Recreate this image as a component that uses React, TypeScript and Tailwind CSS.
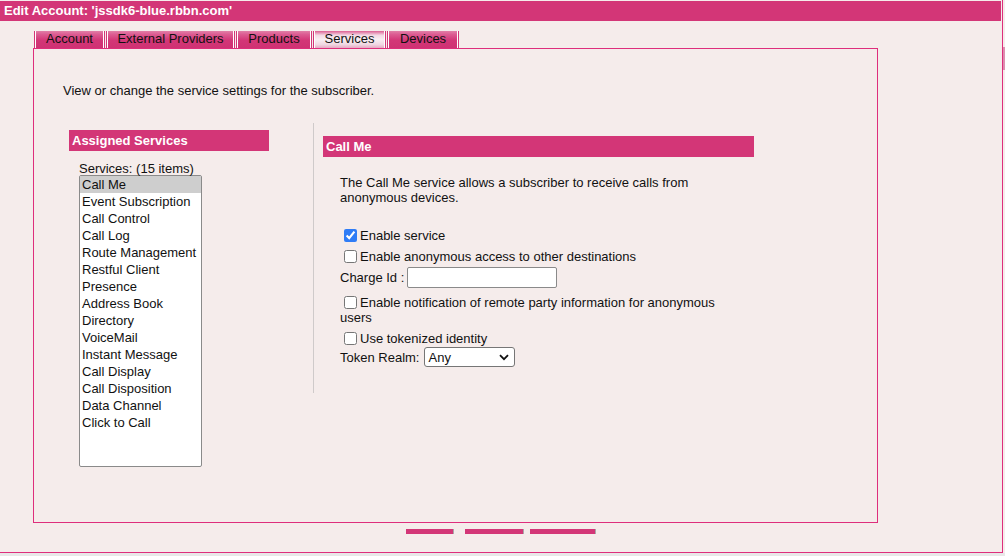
import React from 'react';

const services = [
  'Call Me',
  'Event Subscription',
  'Call Control',
  'Call Log',
  'Route Management',
  'Restful Client',
  'Presence',
  'Address Book',
  'Directory',
  'VoiceMail',
  'Instant Message',
  'Call Display',
  'Call Disposition',
  'Data Channel',
  'Click to Call',
];

const tabs = [
  { label: 'Account', width: 'w-[69px]' },
  { label: 'External Providers', width: 'w-[127px]' },
  { label: 'Products', width: 'w-[74px]' },
  { label: 'Services', width: 'w-[71px]', active: true },
  { label: 'Devices', width: 'w-[70px]' },
];

function Check({ checked }: { checked?: boolean }) {
  return (
    <input
      type="checkbox"
      defaultChecked={checked}
      className="m-0 mr-[3px] h-[13px] w-[13px] accent-[#2f7cf6]"
    />
  );
}

export default function App() {
  return (
    <div className="w-[1005px] h-[556px] bg-[#e8e8e8] text-[13px] text-[#111] font-['Liberation_Sans',Arial,sans-serif] overflow-hidden">
      <div className="flex h-[553px]">
        {/* main frame */}
        <div className="w-[1003px] h-full bg-[#f5eceb] border-r border-b border-[#de2e7c] pt-[1px]">
          <div className="h-[20px] mr-[1px] bg-[#d33677] text-white font-bold pl-[4px] leading-[20px]">
            Edit Account: 'jssdk6-blue.rbbn.com'
          </div>

          {/* tabs */}
          <div className="flex ml-[35px] mt-[10px] h-[17px]">
            {tabs.map((t) => (
              <div
                key={t.label}
                className={`${t.width} mr-[3px] h-[17px] border-x border-white shadow-[-1px_0_0_#d33677,1px_0_0_#d33677] text-center leading-[16px] ${
                  t.active
                    ? 'bg-[linear-gradient(to_bottom,#dc5f93_0%,#f3d9e4_25%,#f8eef2_50%,#f0d6e1_80%,#e5a9c2_100%)]'
                    : 'bg-[linear-gradient(to_bottom,#e17fa7_0%,#dc5c92_20%,#d33677_55%,#cf3273_100%)]'
                }`}
              >
                {t.label}
              </div>
            ))}
          </div>

          {/* content box */}
          <div className="ml-[33px] w-[845px] h-[475px] border border-[#de2e7c]">
            <p className="ml-[29px] mt-[34px] leading-[15px]">
              View or change the service settings for the subscriber.
            </p>

            <div className="flex mt-[25px]">
              {/* left column */}
              <div className="ml-[35px] w-[200px] pt-[7px]">
                <div className="h-[21px] bg-[#d33677] text-white font-bold pl-[3px] leading-[21px]">
                  Assigned Services
                </div>
                <div className="ml-[10px] mt-[10px] leading-[15px]">Services: (15 items)</div>
                <div className="ml-[10px] -mt-[1px] w-[123px] h-[292px] bg-white border border-[#8a8a8a] rounded-[2px]">
                  {services.map((s, i) => (
                    <div
                      key={s}
                      className={`h-[17px] leading-[17px] pl-[2px] whitespace-nowrap ${
                        i === 0 ? 'bg-[#cecece]' : ''
                      }`}
                    >
                      {s}
                    </div>
                  ))}
                </div>
              </div>

              {/* divider */}
              <div className="ml-[44px] w-[1px] h-[270px] bg-[#cfcaca]" />

              {/* right column */}
              <div className="ml-[9px] w-[431px] pt-[13px]">
                <div className="h-[21px] bg-[#d33677] text-white font-bold pl-[3px] leading-[21px]">
                  Call Me
                </div>
                <div className="ml-[17px] w-[390px] mt-[18px] leading-[15px]">
                  <p>The Call Me service allows a subscriber to receive calls from anonymous devices.</p>

                  <div className="mt-[20px] flex flex-col">
                    <label className="flex items-center h-[21px] pl-[4px]">
                      <Check checked />
                      Enable service
                    </label>
                    <label className="flex items-center h-[21px] pl-[4px]">
                      <Check />
                      Enable anonymous access to other destinations
                    </label>
                    <div className="flex items-center h-[21px]">
                      <span className="mr-[3px]">Charge Id :</span>
                      <input
                        type="text"
                        className="w-[150px] h-[21px] bg-white border border-[#8a8a8a] rounded-[2px] outline-none"
                      />
                    </div>
                    <label className="block mt-[7px] leading-[15px]">
                      <span className="inline-block h-[15px] pl-[4px] align-top">
                        <input
                          type="checkbox"
                          className="m-0 mt-[1px] mr-[3px] h-[13px] w-[13px] align-top accent-[#2f7cf6]"
                        />
                      </span>
                      Enable notification of remote party information for anonymous users
                    </label>
                    <label className="flex items-center h-[21px] mt-[3px] pl-[4px]">
                      <Check />
                      Use tokenized identity
                    </label>
                    <div className="flex items-center h-[20px] -mt-[2px]">
                      <span className="mr-[5px]">Token Realm:</span>
                      <div className="relative w-[91px] h-[20px] bg-white border border-[#767676] rounded-[3px] flex items-center pl-[3px]">
                        Any
                        <svg
                          className="absolute right-[5px] top-[6px]"
                          width="10"
                          height="7"
                          viewBox="0 0 10 7"
                          fill="none"
                          stroke="#111"
                          strokeWidth="1.8"
                        >
                          <path d="M1 1.2 5 5.2 9 1.2" />
                        </svg>
                      </div>
                    </div>
                  </div>
                </div>
              </div>
            </div>
          </div>

          {/* bottom buttons */}
          <div className="flex ml-[406px] mt-[6px]">
            <div className="w-[48px] h-[5px] bg-[#d33677] border-r border-[#a9a9a9]" />
            <div className="ml-[11px] w-[59px] h-[5px] bg-[#d33677] border-r border-[#a9a9a9]" />
            <div className="ml-[6px] w-[66px] h-[5px] bg-[#d33677] border-r border-[#a9a9a9]" />
          </div>
        </div>
        {/* right edge strip */}
        <div className="w-[2px] h-full bg-[#f5eceb] pt-[47px]">
          <div className="h-[23px] bg-[#dc8fb0]" />
        </div>
      </div>
    </div>
  );
}
